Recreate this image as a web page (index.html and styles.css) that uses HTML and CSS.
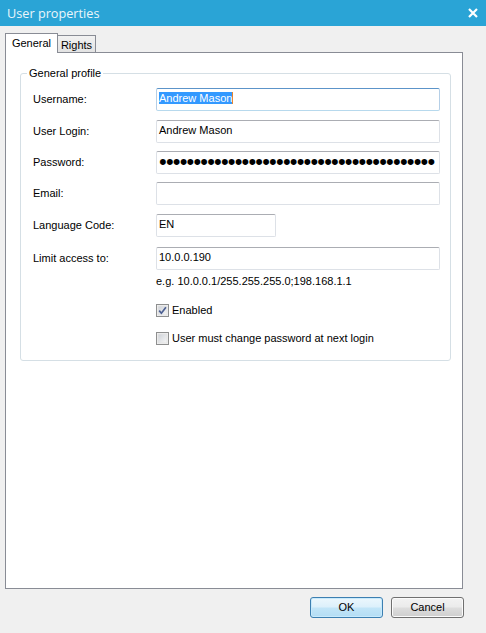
FILE: index.html
```html
<!DOCTYPE html>
<html>
<head>
<meta charset="utf-8">
<link rel="stylesheet" href="styles.css">
</head>
<body>
<div class="dialog">
  <div class="titlebar">
    <span class="title">User properties</span>
    <svg class="close" width="10" height="10" viewBox="0 0 10 10"><path d="M1 1L9 9M9 1L1 9" stroke="#fff" stroke-width="2.2" fill="none"/></svg>
  </div>
  <div class="tabs">
    <div class="tab tab-active">General</div>
    <div class="tab tab-rights">Rights</div>
  </div>
  <div class="panel">
    <fieldset class="group">
      <legend class="legend">General profile</legend>
      <div class="row">
        <span class="label">Username:</span>
        <div class="field field-focus"><span class="sel">Andrew Mason</span></div>
      </div>
      <div class="row row-2">
        <span class="label">User Login:</span>
        <div class="field">Andrew Mason</div>
      </div>
      <div class="row row-3">
        <span class="label">Password:</span>
        <div class="field field-pw"><span class="dots">••••••••••••••••••••••••••••••••••••••••</span></div>
      </div>
      <div class="row row-4">
        <span class="label">Email:</span>
        <div class="field"></div>
      </div>
      <div class="row row-5">
        <span class="label">Language Code:</span>
        <div class="field field-short">EN</div>
      </div>
      <div class="row row-6">
        <span class="label">Limit access to:</span>
        <div class="field">10.0.0.190</div>
      </div>
      <div class="hint">e.g. 10.0.0.1/255.255.255.0;198.168.1.1</div>
      <div class="check check-1">
        <svg class="box" width="13" height="13" viewBox="0 0 13 13">
          <defs>
            <linearGradient id="g1" x1="0" y1="0" x2="1" y2="1">
              <stop offset="0" stop-color="#cdd1d7"/>
              <stop offset="1" stop-color="#f7f7f7"/>
            </linearGradient>
          </defs>
          <rect x="0.5" y="0.5" width="12" height="12" fill="#f4f4f4" stroke="#8e8f8f"/>
          <rect x="2" y="2" width="9" height="9" fill="url(#g1)" stroke="#e2e2e2" stroke-width="1"/>
          <path d="M3.2 6.6L5.4 9.2L9.9 3.2" stroke="#4c5f92" stroke-width="1.7" fill="none"/>
        </svg>
        <span class="check-text">Enabled</span>
      </div>
      <div class="check check-2">
        <svg class="box" width="13" height="13" viewBox="0 0 13 13">
          <defs>
            <linearGradient id="g2" x1="0" y1="0" x2="1" y2="1">
              <stop offset="0" stop-color="#cdd1d7"/>
              <stop offset="1" stop-color="#f7f7f7"/>
            </linearGradient>
          </defs>
          <rect x="0.5" y="0.5" width="12" height="12" fill="#f4f4f4" stroke="#8e8f8f"/>
          <rect x="2" y="2" width="9" height="9" fill="url(#g2)" stroke="#e2e2e2" stroke-width="1"/>
        </svg>
        <span class="check-text">User must change password at next login</span>
      </div>
    </fieldset>
  </div>
  <div class="buttons">
    <div class="btn btn-ok">OK</div>
    <div class="btn btn-cancel">Cancel</div>
  </div>
</div>
</body>
</html>
```
FILE: styles.css
```css
html, body {
  margin: 0;
  padding: 0;
}
body {
  background: #f0f0f0;
  font-family: "Liberation Sans", Arial, sans-serif;
  font-size: 11px;
  line-height: 13px;
  color: #000;
}
.dialog {
  width: 486px;
  height: 633px;
  background: #f0f0f0;
  overflow: hidden;
}
.titlebar {
  height: 26px;
  background: #2aa4d6;
  display: flex;
  align-items: center;
  justify-content: space-between;
  padding: 0 8px 0 7px;
}
.title {
  font-family: "Open Sans", "Noto Sans", sans-serif;
  font-size: 12.7px;
  color: #eaf6fb;
  line-height: 18px;
  margin-top: -1px;
}
.close {
  display: block;
  margin-top: -1px;
}
.tabs {
  display: flex;
  align-items: flex-end;
  height: 19px;
  margin: 7px 0 0 5px;
}
.tab {
  box-sizing: border-box;
  border: 1px solid #898c95;
  border-bottom: none;
  padding-top: 3px;
  text-align: center;
}
.tab-active {
  width: 53px;
  height: 20px;
  margin-bottom: -1px;
  background: #fff;
  position: relative;
  z-index: 1;
}
.tab-rights {
  width: 39px;
  height: 17px;
  margin-left: -1px;
  background: linear-gradient(#f2f2f2, #e3e3e3);
}
.panel {
  box-sizing: border-box;
  width: 458px;
  height: 537px;
  margin-left: 5px;
  background: #fff;
  border: 1px solid #898c95;
  padding: 14px 11px 0 14px;
}
.group {
  margin: 0;
  padding: 8px 10px 15px 12px;
  border: 1px solid #d5dfe5;
  border-radius: 3px;
  min-width: 0;
}
.legend {
  padding: 0 2px;
  margin-left: -6px;
  line-height: 13px;
}
.row {
  display: flex;
  align-items: center;
}
.row-2 { margin-top: 9px; }
.row-3 { margin-top: 8px; }
.row-4 { margin-top: 8px; }
.row-5 { margin-top: 9px; }
.row-6 { margin-top: 10px; }
.label {
  width: 123px;
  flex: none;
}
.field {
  box-sizing: border-box;
  width: 284px;
  height: 23px;
  border: 1px solid #dde1e7;
  border-top-color: #abadb3;
  border-radius: 2px;
  background: #fff;
  padding: 3px 2px 0 2px;
  white-space: nowrap;
  overflow: hidden;
}
.field-focus {
  border-color: #b5cfe7;
  border-top-color: #5c94c9;
  border-bottom-color: #b7d9ed;
}
.sel {
  background: #3399ff;
  color: #fff;
  border-right: 1px solid #e6862e;
}
.field-pw {
  padding: 1px 0 0 2px;
  overflow: visible;
}
.dots {
  display: inline-block;
  vertical-align: top;
  font-family: "Liberation Sans", Arial, sans-serif;
  font-size: 22px;
  letter-spacing: -0.82px;
  line-height: 17px;
  height: 17px;
  color: #000;
}
.field-short {
  width: 120px;
}
.hint {
  margin: 5px 0 0 123px;
}
.check {
  display: flex;
  align-items: center;
  margin-left: 123px;
  height: 13px;
}
.check-1 { margin-top: 16px; }
.check-2 { margin-top: 15px; }
.box {
  display: block;
  flex: none;
}
.check-text {
  margin-left: 3px;
}
.buttons {
  display: flex;
  justify-content: flex-end;
  gap: 8px;
  margin: 8px 22px 0 0;
}
.btn {
  box-sizing: border-box;
  width: 73px;
  height: 21px;
  border-radius: 3px;
  display: flex;
  align-items: center;
  justify-content: center;
}
.btn-ok {
  border: 1px solid #3c7fb1;
  background: linear-gradient(#ecf7fd 0%, #dcf0fb 48%, #c2e5f8 52%, #b3ddf4 100%);
  box-shadow: inset 0 0 0 1px #c8eafc;
}
.btn-cancel {
  border: 1px solid #707070;
  background: linear-gradient(#f2f2f2 0%, #ebebeb 48%, #dddddd 52%, #cfcfcf 100%);
  box-shadow: inset 0 0 0 1px #fbfbfb;
}
```
